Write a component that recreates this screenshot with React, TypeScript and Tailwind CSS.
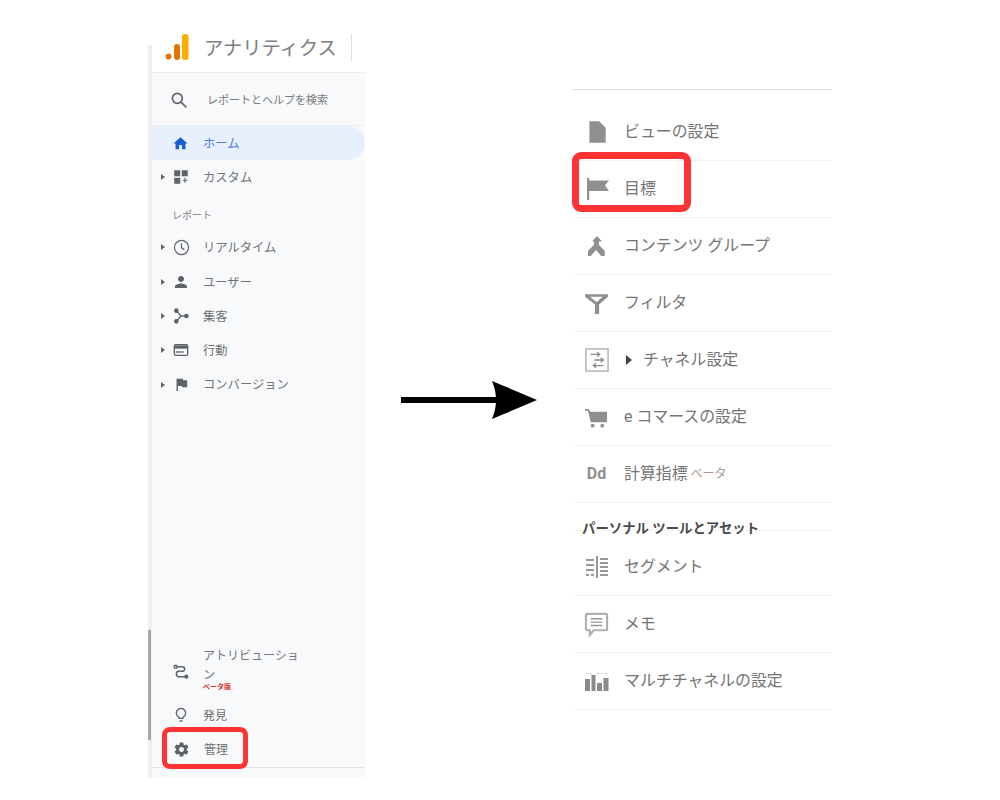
const cjk = "font-['Roboto','Noto_Sans_CJK_JP',sans-serif]";

function Mat({ d, size = 18, color = '#5f6368' }: { d: string; size?: number; color?: string }) {
    return (
        <svg width={size} height={size} viewBox="0 0 24 24" fill={color}>
            <path d={d} />
        </svg>
    );
}

const icons = {
    home: 'M10 20v-6h4v6h5v-8h3L12 3 2 12h3v8z',
    custom: 'M3 3h8v8H3zM13 3h8v8h-8zM3 13h8v8H3zM14.500 15.500h2V13h1.500v2.500h2.500V17H18v2.500h-1.500V17h-2z',
    person: 'M12 12c2.210 0 4-1.790 4-4s-1.790-4-4-4-4 1.790-4 4 1.790 4 4 4zm0 2c-2.670 0-8 1.340-8 4v2h16v-2c0-2.660-5.330-4-8-4z',
    flag: 'M14.400 6L14 4H5v17h2v-7h5.600l.4 2h7V6z',
    gear: 'M19.430 12.980c.04-.32.07-.64.07-.98s-.03-.66-.07-.98l2.110-1.650c.19-.15.24-.42.12-.64l-2-3.460c-.12-.22-.39-.3-.61-.22l-2.490 1c-.52-.4-1.080-.73-1.690-.98l-.38-2.650C14.460 2.180 14.250 2 14 2h-4c-.25 0-.46.18-.49.42l-.38 2.650c-.61.25-1.170.59-1.690.98l-2.490-1c-.23-.09-.49 0-.61.22l-2 3.460c-.13.22-.07.49.12.64l2.110 1.650c-.04.32-.07.65-.07.98s.03.66.07.98l-2.110 1.650c-.19.15-.24.42-.12.64l2 3.460c.12.22.39.3.61.22l2.490-1c.52.4 1.080.73 1.690.98l.38 2.650c.03.24.24.42.49.42h4c.25 0 .46-.18.49-.42l.38-2.650c.61-.25 1.170-.59 1.690-.98l2.490 1c.23.09.49 0 .61-.22l2-3.460c.12-.22.07-.49-.12-.64l-2.110-1.650zM12 15.500c-1.930 0-3.500-1.570-3.500-3.500s1.570-3.500 3.500-3.500 3.500 1.570 3.500 3.500-1.570 3.500-3.500 3.500z',
    doc: 'M5 2h9l6 6v14H5zM13.500 9V3.500L19 9z',
    goal: 'M2 1h2.200v22H2zM4.200 3.500H24l-4 5 4 5.500H4.200z',
    merge: 'M12 2l5 5.500h-3.200v3.200l6 6.300V22h-3.600l-5.200-6-5.200 6H3v-5l6-6.300-.1-3.200H7z',
    funnel: 'M1 3h22v2.500l-8.500 7.500v9h-4v-9L1 5.500zM6 5.500l5.500 4.800h1L18 5.500z',
    cart: 'M0 3h4l1.500 3H23v11H6L3 5H0zM8 18.500a2 2 0 1 1 0 4 2 2 0 0 1 0-4zM18 18.500a2 2 0 1 1 0 4 2 2 0 0 1 0-4z',
};

function SearchIcon() {
    return (
        <svg width="20" height="20" viewBox="0 0 24 24" fill="none" stroke="#5f6368" strokeWidth="2">
            <circle cx="10" cy="10" r="6" />
            <path d="M14.500 14.500L21 21" />
        </svg>
    );
}

function ClockIcon() {
    return (
        <svg width="17" height="17" viewBox="0 0 24 24" fill="none" stroke="#5f6368" strokeWidth="1.700">
            <circle cx="12" cy="12" r="10" />
            <path d="M12 6.500V12.500L16 15" />
        </svg>
    );
}

function AcquisitionIcon() {
    return (
        <svg width="16" height="16" viewBox="0 0 24 24" fill="#5f6368" stroke="#5f6368" strokeWidth="2">
            <path d="M5 4l7 8H20M12 12l-7 8" fill="none" />
            <circle cx="5" cy="4" r="2.500" />
            <circle cx="5" cy="20" r="2.500" />
            <circle cx="20" cy="12" r="2.500" />
        </svg>
    );
}

function BehaviorIcon() {
    return (
        <svg width="16" height="16" viewBox="0 0 24 24" fill="none" stroke="#5f6368" strokeWidth="2">
            <rect x="2" y="4" width="20" height="16" rx="2" />
            <path d="M2 7.500H22" strokeWidth="5" />
            <path d="M4 15H16" />
        </svg>
    );
}

function AttributionIcon() {
    return (
        <svg width="16" height="16" viewBox="0 0 24 24" fill="none" stroke="#5f6368" strokeWidth="2.200">
            <circle cx="4" cy="4" r="2.200" />
            <path d="M6 4H14a3 3 0 0 1 0 7H9a3.500 3.500 0 0 0 0 8H19" />
            <circle cx="20" cy="19" r="2" fill="#5f6368" />
        </svg>
    );
}

function BulbIcon() {
    return (
        <svg width="16" height="16" viewBox="0 0 24 24" fill="none" stroke="#5f6368" strokeWidth="2">
            <path d="M9 17v-1.500a7 7 0 1 1 6 0V17z" />
            <path d="M9.500 21h5" />
        </svg>
    );
}

function ChannelIcon() {
    return (
        <svg width="24" height="24" viewBox="0 0 26 26" fill="none" stroke="#8a8a8a" strokeWidth="1.400">
            <rect x="1" y="1" width="24" height="24" stroke="#a8a8a8" />
            <path d="M6 7H16M13 4.500L16 7l-3 2.500M10 13H20M17 10.500L20 13l-3 2.500M20 19H9M12 16.500L9 19l3 2.500" />
        </svg>
    );
}

function SegmentIcon() {
    return (
        <svg width="24" height="24" viewBox="0 0 24 24" fill="#999999">
            <rect x="11" y="1" width="2" height="22" />
            <path d="M1 4h8v2H1zM1 9h8v2H1zM1 14h8v2H1zM1 19h3v2H1zM6 19h3v2H6zM15 3h8v2h-8zM15 7h8v2h-8zM15 11h8v2h-8zM15 15h8v2h-8zM15 19h8v2h-8z" />
        </svg>
    );
}

function NoteIcon() {
    return (
        <svg width="25" height="25" viewBox="0 0 26 26" fill="none" stroke="#b0b0b0" strokeWidth="2.200">
            <path d="M3 2h20a1 1 0 0 1 1 1v15a1 1 0 0 1-1 1H10l-4 5v-5H3a1 1 0 0 1-1-1V3a1 1 0 0 1 1-1z" />
            <path d="M7 7h12M7 10.500h12M7 14h12" strokeWidth="1.500" stroke="#999999" />
        </svg>
    );
}

function MultiChannelIcon() {
    return (
        <svg width="24" height="19" viewBox="0 0 24 19" fill="#8a8a8a">
            <path d="M0 7h5v12H0zM6.500 3h4v16h-4zM12 11h5v8h-5zM18.500 6h5v13h-5z" />
            <path d="M1 1h1.500v1H1zM5 1h1.500v1H5zM12 1h1.500v1H12zM16 1h1.500v1H16zM20 1h1.500v1H20z" fill="#bbbbbb" />
        </svg>
    );
}

function Caret() {
    return <span className="w-0 h-0 border-y-[3px] border-y-transparent border-l-[4px] border-l-[#666]" />;
}

function NavRow({ icon, label, caret = true }: { icon: React.ReactNode; label: string; caret?: boolean }) {
    return (
        <div className="flex items-center h-[34.300px] pl-[9px]">
            <span className="w-[5px] flex">{caret && <Caret />}</span>
            <span className="w-[24px] ml-[3px] mr-[10px] flex justify-center">{icon}</span>
            <span className="pt-[2px] text-[12.300px] text-[#6f7276]">{label}</span>
        </div>
    );
}

function Sidebar() {
    return (
        <div className="relative w-[217px] h-[748px] mt-[30px] pl-[4px] flex flex-col">
            <div className="absolute left-0 top-[15px] bottom-0 w-[4px] bg-[#eeeeee]" />
            <div className="absolute left-0 top-[600px] h-[110px] w-[3px] bg-[#a8a8a8]" />
            <div className="flex items-center h-[43px] pl-[13px] pb-[8px] border-b border-b-[#eeeeee]">
                <svg width="24" height="26" viewBox="0 0 24 26">
                    <circle cx="3.500" cy="22.500" r="3" fill="#e8710a" />
                    <rect x="9" y="10" width="6" height="16" rx="3" fill="#e37400" />
                    <rect x="17" y="0" width="6.500" height="26" rx="3" fill="#f9ab00" />
                </svg>
                <span className="ml-[15px] mt-[3px] text-[19.300px] text-[#7b7e82] leading-none">アナリティクス</span>
                <span className="ml-[14px] w-px h-[27px] bg-[#dddddd]" />
            </div>
            <div className="flex-1 bg-[#f8f9fa] flex flex-col">
                <div className="flex items-center h-[53px] pl-[17px] pt-[1px] border-b border-b-[#eceef0]">
                    <SearchIcon />
                    <span className="ml-[18px] mt-[3px] text-[11px] text-[#77797d]">レポートとヘルプを検索</span>
                </div>
                <div className="flex items-center h-[34px] bg-[#e8f0fe] rounded-r-full pl-[20px]">
                    <Mat d={icons.home} size={17} color="#1a5fd0" />
                    <span className="ml-[14px] pt-[2px] text-[12.300px] text-[#4a7fdc]">ホーム</span>
                </div>
                <NavRow icon={<Mat d={icons.custom} size={18} />} label="カスタム" />
                <div className="h-[36px] pt-[14px] pl-[20px] text-[10px] text-[#7d8084]">レポート</div>
                <NavRow icon={<ClockIcon />} label="リアルタイム" />
                <NavRow icon={<Mat d={icons.person} />} label="ユーザー" />
                <NavRow icon={<AcquisitionIcon />} label="集客" />
                <NavRow icon={<BehaviorIcon />} label="行動" />
                <NavRow icon={<Mat d={icons.flag} size={17} />} label="コンバージョン" />
                <div className="flex-1" />
                <div className="flex items-center h-[53px] pl-[21px]">
                    <AttributionIcon />
                    <div className="ml-[14px] w-[100px] text-[12px] text-[#75787c] leading-[19px] -mt-[6px]">
                        アトリビューション
                        <div className="text-[7px] font-bold text-[#d93025] leading-[5px]">ベータ版</div>
                    </div>
                </div>
                <div className="flex items-center h-[34px] pl-[21px]">
                    <BulbIcon />
                    <span className="ml-[14px] pt-[2px] text-[12px] text-[#6f7276]">発見</span>
                </div>
                <div className="relative flex items-center h-[35px] pl-[21px]">
                    <Mat d={icons.gear} size={17} />
                    <span className="ml-[14px] text-[12px] text-[#6f7276]">管理</span>
                    <div className="absolute left-[10px] -top-[5px] w-[86px] h-[42px] border-[5px] border-[#ff3333] rounded-[8px]" />
                </div>
                <div className="h-[11px] border-t border-t-[#e4e4e4]" />
            </div>
        </div>
    );
}

function Arrow() {
    return (
        <svg width="137" height="40" viewBox="0 0 137 40" className="ml-[36px] mt-[380px] shrink-0">
            <rect x="0" y="17" width="100" height="6" fill="#000" />
            <path d="M91 1L136 20 91 39Q99 20 91 1z" fill="#000" />
        </svg>
    );
}

function SettingRow({ icon, children, className = '' }: { icon: React.ReactNode; children: React.ReactNode; className?: string }) {
    return (
        <div className={`relative flex items-center h-[57px] border-b border-b-[#f0f0f0] ${className}`}>
            <span className="w-[45px] mr-[5px] flex justify-center">{icon}</span>
            <span className="flex items-center text-[15.900px] text-[#747474]">{children}</span>
        </div>
    );
}

function SettingsList() {
    return (
        <div className="w-[260px] mt-[89px] ml-[34px] shrink-0">
            <div className="h-[15px] border-t border-t-[#dddddd]" />
            <div className="pl-[2px]">
                <SettingRow icon={<Mat d={icons.doc} size={26} color="#8f8f8f" />}>ビューの設定</SettingRow>
                <SettingRow icon={<Mat d={icons.goal} size={24} color="#8f8f8f" />}>
                    目標
                    <div className="absolute -left-[2px] top-[-9px] w-[119px] h-[60px] border-[7px] border-[#ff3333] rounded-[9px]" />
                </SettingRow>
                <SettingRow icon={<Mat d={icons.merge} size={24} color="#8f8f8f" />}>コンテンツ グループ</SettingRow>
                <SettingRow icon={<Mat d={icons.funnel} size={25} color="#8f8f8f" />}>フィルタ</SettingRow>
                <SettingRow icon={<ChannelIcon />}>
                    <span className="w-0 h-0 ml-[2px] mr-[11px] border-y-[5px] border-y-transparent border-l-[6px] border-l-[#444]" />
                    チャネル設定
                </SettingRow>
                <SettingRow icon={<Mat d={icons.cart} size={23} color="#8f8f8f" />}>
                    <span className="mr-[4px]">e</span>コマースの設定
                </SettingRow>
                <SettingRow icon={<span className="text-[16px] font-bold text-[#8f8f8f]">Dd</span>}>
                    計算指標
                    <span className="ml-[3px] text-[12px] text-[#b09a8c]">ベータ</span>
                </SettingRow>
                <div className="flex items-end h-[28px] border-b border-b-[#f0f0f0]">
                    <span className="ml-[8px] -mb-[8px] text-[13.400px] leading-[18px] font-bold text-[#4a4a4a]">パーソナル ツールとアセット</span>
                </div>
                <div className="h-[8px]" />
                <SettingRow icon={<SegmentIcon />}>セグメント</SettingRow>
                <SettingRow icon={<NoteIcon />}>メモ</SettingRow>
                <SettingRow icon={<MultiChannelIcon />}>マルチチャネルの設定</SettingRow>
            </div>
        </div>
    );
}

export default function App() {
    return (
        <div className={`w-[1000px] h-[800px] bg-white flex items-start pl-[148px] overflow-hidden ${cjk}`}>
            <Sidebar />
            <Arrow />
            <SettingsList />
        </div>
    );
}
